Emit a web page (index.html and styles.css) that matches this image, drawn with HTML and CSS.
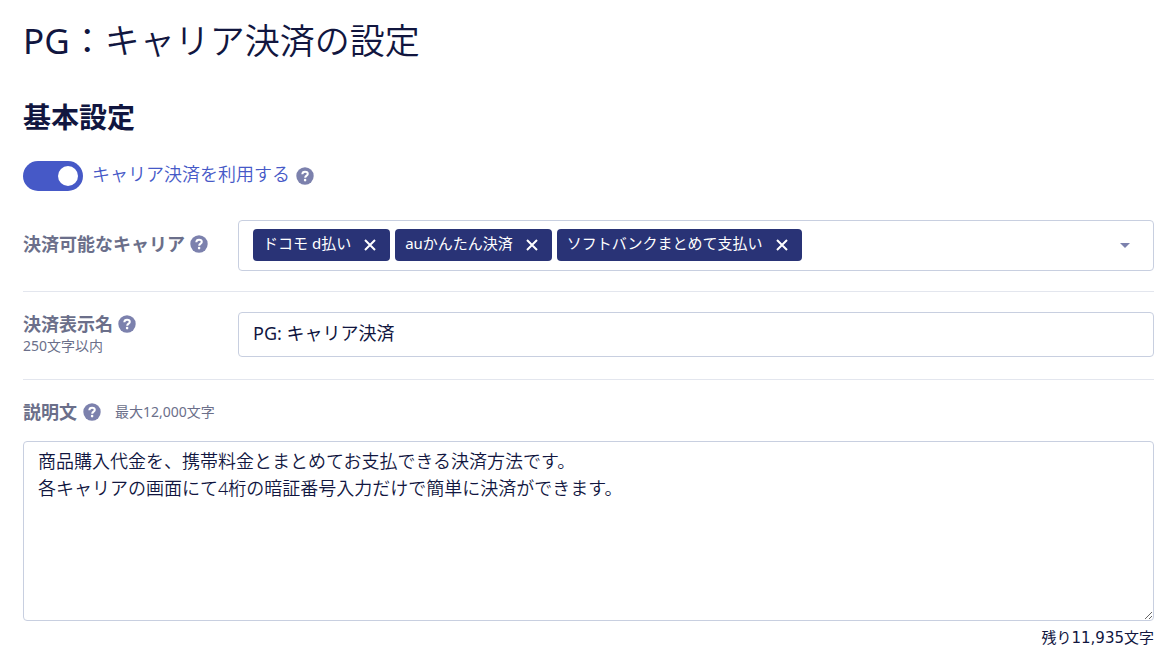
FILE: index.html
```html
<!DOCTYPE html>
<html lang="ja">
<head>
    <meta charset="UTF-8">
    <meta name="viewport" content="width=device-width, initial-scale=1.0">
    <title>PG：キャリア決済の設定</title>
    <link rel="stylesheet" href="styles.css">
</head>
<body>
    <!-- Shared icons -->
    <svg class="sprite" aria-hidden="true">
        <symbol id="icon-help" viewBox="0 0 18 18">
            <circle cx="9" cy="9" r="8.7" fill="#7c81ad"/>
            <path d="M6.3 7.2C6.4 5.5 7.5 4.7 9 4.7s2.8.8 2.8 2.3c0 1.7-2.6 1.7-2.6 3.7" fill="none" stroke="#fff" stroke-width="2"/>
            <circle cx="9.1" cy="13.1" r="1.3" fill="#fff"/>
        </symbol>
        <symbol id="icon-close" viewBox="0 0 12 12">
            <path d="M1 1l10 10M11 1L1 11" fill="none" stroke="#fff" stroke-width="2"/>
        </symbol>
    </svg>

    <main class="container">
        <h1><span class="latin">PG</span>：キャリア決済の設定</h1>
        <h2>基本設定</h2>

        <form>
            <div class="switch-row">
                <input type="checkbox" class="switch" id="useCarrier" checked>
                <label for="useCarrier">キャリア決済を利用する</label>
                <button type="button" class="help" aria-label="ヘルプ"><svg><use href="#icon-help"/></svg></button>
            </div>

            <!-- Carriers -->
            <div class="row row-carrier">
                <div class="row-label">
                    <span class="name" id="carrierLabel">決済可能なキャリア</span>
                    <button type="button" class="help" aria-label="ヘルプ"><svg><use href="#icon-help"/></svg></button>
                </div>
                <div class="field multiselect" role="group" aria-labelledby="carrierLabel">
                    <div class="tags">
                        <span class="tag"><span>ドコモ d払い</span><button type="button" aria-label="削除"><svg><use href="#icon-close"/></svg></button></span>
                        <span class="tag"><span>auかんたん決済</span><button type="button" aria-label="削除"><svg><use href="#icon-close"/></svg></button></span>
                        <span class="tag"><span>ソフトバンクまとめて支払い</span><button type="button" aria-label="削除"><svg><use href="#icon-close"/></svg></button></span>
                    </div>
                    <button type="button" class="open" aria-label="開く"></button>
                </div>
            </div>

            <!-- Display name -->
            <div class="row row-name">
                <div class="row-label">
                    <label class="name" for="displayName">決済表示名</label>
                    <button type="button" class="help" aria-label="ヘルプ"><svg><use href="#icon-help"/></svg></button>
                    <small>250文字以内</small>
                </div>
                <input type="text" class="field" id="displayName" value="PG: キャリア決済" maxlength="250">
            </div>

            <!-- Description -->
            <div class="description">
                <div class="description-head">
                    <label class="name" for="description">説明文</label>
                    <button type="button" class="help" aria-label="ヘルプ"><svg><use href="#icon-help"/></svg></button>
                    <small>最大12,000文字</small>
                </div>
                <textarea class="field" id="description" maxlength="12000">商品購入代金を、携帯料金とまとめてお支払できる決済方法です。
各キャリアの画面にて4桁の暗証番号入力だけで簡単に決済ができます。</textarea>
                <p class="count">残り11,935文字</p>
            </div>
        </form>
    </main>
</body>
</html>
```
FILE: styles.css
```css
* {
    box-sizing: border-box;
}
body {
    margin: 0;
    background-color: #fff;
    color: #11163f;
    font-family: "Noto Sans", "Noto Sans CJK JP", sans-serif;
    font-size: 18px;
    line-height: 24px;
}
.sprite {
    display: none;
}
.container {
    padding: 17px 13px 8px 23px;
}
h1 {
    margin: 0 0 34px;
    font-size: 35px;
    font-weight: 350;
    line-height: 48px;
}
.latin {
    font-weight: 400;
}
h2 {
    margin: 0;
    font-size: 28px;
    font-weight: bold;
    line-height: 36px;
}
button {
    padding: 0;
    border: none;
    background: none;
    cursor: pointer;
}
input, textarea {
    font: inherit;
    color: inherit;
}
.help {
    display: inline-flex;
    width: 18px;
    height: 18px;
    flex: none;
}
.help svg {
    width: 18px;
    height: 18px;
}
.name {
    color: #6b6f8a;
    font-weight: bold;
}
small {
    color: #6b6f8a;
    font-size: 14px;
    line-height: 20px;
}
.switch-row {
    display: flex;
    align-items: center;
    margin-top: 26px;
    color: #4659c7;
}
.switch-row label {
    margin: 0 6px 4px 9px;
    font-weight: 350;
}
.switch {
    appearance: none;
    display: flex;
    justify-content: flex-start;
    align-items: center;
    width: 60px;
    height: 30px;
    margin: 0;
    padding: 5px;
    border-radius: 15px;
    background-color: #c8cde0;
    cursor: pointer;
}
.switch::before {
    content: "";
    width: 20px;
    height: 20px;
    border-radius: 50%;
    background-color: #fff;
}
.switch:checked {
    justify-content: flex-end;
    background-color: #4659c7;
}
.row {
    display: grid;
    grid-template-columns: 215px 1fr;
    border-bottom: 1px solid #e3e6ee;
}
.row-carrier {
    align-items: center;
    padding: 29px 0 20px;
}
.row-carrier .row-label {
    padding-bottom: 3px;
}
.row-name {
    padding: 20px 0 22px;
}
.row-label {
    display: flex;
    flex-wrap: wrap;
    align-items: center;
    align-content: flex-start;
    column-gap: 5px;
}
.row-label small {
    width: 100%;
}
.field {
    width: 100%;
    border: 1px solid #c8cfe0;
    border-radius: 4px;
    background-color: #fff;
}
.multiselect {
    display: flex;
    align-items: center;
    justify-content: space-between;
    min-height: 51px;
    padding: 7px 14px 8px;
}
.tags {
    display: flex;
    flex-wrap: wrap;
    gap: 5px;
}
.tag {
    display: flex;
    align-items: center;
    gap: 9px;
    height: 32px;
    padding: 0 10px;
    border-radius: 4px;
    background-color: #293376;
    color: #fff;
    font-size: 15px;
}
.tag span {
    padding-bottom: 4px;
}
.tag button {
    display: flex;
    align-items: center;
    justify-content: center;
    width: 20px;
    height: 32px;
}
.tag svg {
    width: 12px;
    height: 12px;
}
.open {
    width: 28px;
    height: 28px;
}
.open::before {
    content: "";
    display: block;
    width: 0;
    margin: 0 auto;
    border: 5px solid transparent;
    border-top-color: #7c81ad;
    border-bottom: none;
}
input.field {
    height: 45px;
    padding: 0 14px 6px;
}
.description {
    padding-top: 20px;
}
.description-head {
    display: flex;
    align-items: center;
    gap: 6px;
    margin-bottom: 17px;
}
.description-head small {
    margin-left: 8px;
}
textarea.field {
    display: block;
    height: 180px;
    padding: 6px 14px;
    font-weight: 350;
    line-height: 27px;
    resize: vertical;
}
.count {
    margin: 5px 0 0;
    font-family: "DejaVu Sans", "Noto Sans CJK JP", sans-serif;
    font-size: 15px;
    text-align: right;
}
```
